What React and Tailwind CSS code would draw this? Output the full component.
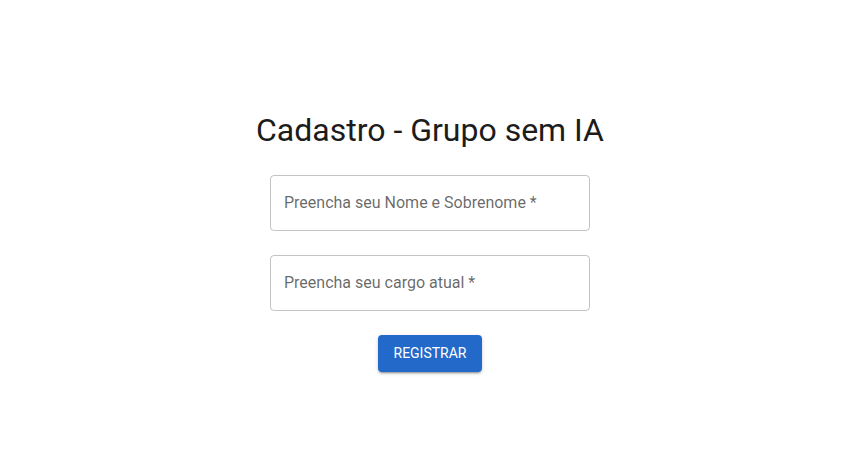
export default function App() {
  return (
    <div className="min-h-[471px] w-full bg-white flex flex-col items-center justify-center pt-[11px] pl-[2px]" style={{ fontFamily: 'Roboto, "Liberation Sans", sans-serif' }}>
      <h1 className="text-[32px] leading-[40px] text-[#1c1c1c] font-normal">Cadastro - Grupo sem IA</h1>
      <div className="mt-[25px] flex flex-col gap-[24px]">
        <div className="w-[320px] h-[56px] border border-[rgba(0,0,0,0.23)] rounded-[4px] flex items-center pl-[13px]">
          <span className="text-[16px] text-[rgba(0,0,0,0.6)]">Preencha seu Nome e Sobrenome *</span>
        </div>
        <div className="w-[320px] h-[56px] border border-[rgba(0,0,0,0.23)] rounded-[4px] flex items-center pl-[13px]">
          <span className="text-[16px] text-[rgba(0,0,0,0.6)]">Preencha seu cargo atual *</span>
        </div>
      </div>
      <button className="mt-[24px] h-[37px] w-[104px] rounded-[4px] bg-[#2369c9] text-white text-[14px] font-normal uppercase shadow-[0px_3px_1px_-2px_rgba(0,0,0,0.2),0px_2px_2px_0px_rgba(0,0,0,0.14),0px_1px_5px_0px_rgba(0,0,0,0.12)]">
        Registrar
      </button>
    </div>
  );
}
